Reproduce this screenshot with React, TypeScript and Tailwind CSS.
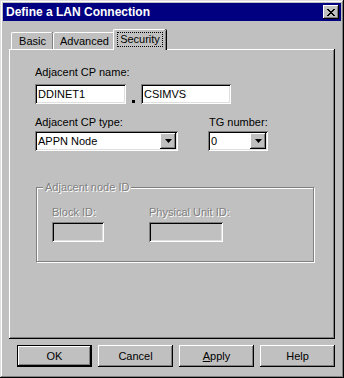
const raised =
  'shadow-[inset_-1px_-1px_0_#000,inset_1px_1px_0_#fff,inset_-2px_-2px_0_#808080]';
const sunken =
  'shadow-[inset_1px_1px_0_#808080,inset_-1px_-1px_0_#fff,inset_2px_2px_0_#000,inset_-2px_-2px_0_#dfdfdf]';
const disabledText = 'text-[#808080] [text-shadow:1px_1px_0_#fff]';

const TextBox = ({ value, w, disabled }: { value?: string; w: string; disabled?: boolean }) => (
  <div
    className={`${w} h-[20px] ${sunken} ${disabled ? 'bg-[#c0c0c0]' : 'bg-white'} flex items-center pl-[3px] text-black`}
  >
    {value}
  </div>
);

const Combo = ({ value, w }: { value: string; w: string }) => (
  <div className={`${w} h-[20px] ${sunken} bg-white flex items-center justify-between pl-[3px] pr-[2px]`}>
    <span>{value}</span>
    <div className={`w-[16px] h-[16px] bg-[#c0c0c0] ${raised} flex items-center justify-center`}>
      <svg width="7" height="4" viewBox="0 0 7 4">
        <polygon points="0,0 7,0 3.5,4" fill="#000" />
      </svg>
    </div>
  </div>
);

const Tab = ({ label, w, selected }: { label: string; w: string; selected?: boolean }) => (
  <div
    className={`${w} flex items-center justify-center bg-[#c0c0c0] rounded-t-[2px] border-l border-t border-white shadow-[inset_-1px_0_0_#808080,1px_0_0_#000] ${
      selected ? 'h-[21px] -mx-[2px] relative z-10 -mb-[1px] pb-[2px]' : 'h-[17px]'
    }`}
  >
    {selected ? (
      <span className="border border-dotted border-black px-[2px] leading-[13px]">{label}</span>
    ) : (
      label
    )}
  </div>
);

const Button = ({ children, def }: { children: React.ReactNode; def?: boolean }) => (
  <div
    className={`w-[75px] h-[22px] bg-[#c0c0c0] flex items-center justify-center ${
      def
        ? 'border border-black shadow-[inset_-1px_-1px_0_#000,inset_1px_1px_0_#fff,inset_-2px_-2px_0_#808080]'
        : raised
    }`}
  >
    {children}
  </div>
);

export default function App() {
  return (
    <div
      className="w-[344px] h-[378px] bg-[#c0c0c0] p-[3px] flex flex-col text-[11px] leading-[13px] text-black shadow-[inset_-1px_-1px_0_#000,inset_1px_1px_0_#dfdfdf,inset_-2px_-2px_0_#808080,inset_2px_2px_0_#fff]"
      style={{ fontFamily: '"Liberation Sans", Arial, sans-serif' }}
    >
      {/* Title bar */}
      <div className="h-[18px] bg-[#000080] flex items-center justify-between pl-[3px] pr-[2px]">
        <span className="text-white font-bold text-[12px]">Define a LAN Connection</span>
        <div className={`w-[16px] h-[14px] bg-[#c0c0c0] ${raised} flex items-center justify-center`}>
          <svg width="8" height="7" viewBox="0 0 8 7" shapeRendering="crispEdges">
            <path
              d="M0 0h2v1H0zM6 0h2v1H6zM1 1h2v1H1zM5 1h2v1H5zM2 2h4v1H2zM3 3h2v1H3zM2 4h4v1H2zM1 5h2v1H1zM5 5h2v1H5zM0 6h2v1H0zM6 6h2v1H6z"
              fill="#000"
            />
          </svg>
        </div>
      </div>

      <div className="px-[6px] pt-[8px] flex flex-col">
        {/* Tabs */}
        <div className="flex items-end h-[20px] pl-[2px]">
          <Tab label="Basic" w="w-[42px]" />
          <Tab label="Advanced" w="w-[62px]" />
          <Tab label="Security" w="w-[53px]" selected />
        </div>

        {/* Panel */}
        <div className="h-[290px] shadow-[inset_-1px_-1px_0_#000,inset_1px_1px_0_#fff,inset_-2px_-2px_0_#808080] pl-[26px] pt-[17px] flex flex-col">
          <div>Adjacent CP name:</div>
          <div className="flex items-end mt-[5px]">
            <TextBox value="DDINET1" w="w-[91px]" />
            <div className="w-[15px] flex justify-center pb-[1px]">
              <div className="w-[3px] h-[3px] bg-black" />
            </div>
            <TextBox value="CSIMVS" w="w-[90px]" />
          </div>

          <div className="flex mt-[12px]">
            <div className="w-[173px] flex flex-col">
              <div>Adjacent CP type:</div>
              <div className="mt-[2px]">
                <Combo value="APPN Node" w="w-[143px]" />
              </div>
            </div>
            <div className="flex flex-col">
              <div className="pl-[1px]">TG number:</div>
              <div className="mt-[2px]">
                <Combo value="0" w="w-[60px]" />
              </div>
            </div>
          </div>

          {/* Group box */}
          <fieldset className="ml-[1px] mt-[30px] w-[278px] h-[81px] border border-[#808080] shadow-[1px_1px_0_#fff,inset_1px_1px_0_#fff]">
            <legend className={`ml-[6px] px-[2px] bg-[#c0c0c0] ${disabledText}`}>Adjacent node ID</legend>
            <div className="flex mt-[12px] pl-[15px]">
              <div className="w-[97px] flex flex-col">
                <div className={disabledText}>Block ID:</div>
                <div className="mt-[3px]">
                  <TextBox w="w-[52px]" disabled />
                </div>
              </div>
              <div className="flex flex-col">
                <div className={disabledText}>Physical Unit ID:</div>
                <div className="mt-[3px]">
                  <TextBox w="w-[74px]" disabled />
                </div>
              </div>
            </div>
          </fieldset>
        </div>

        {/* Buttons */}
        <div className="flex justify-end gap-[6px] mt-[6px]">
          <Button def>OK</Button>
          <Button>Cancel</Button>
          <Button>
            <span>
              <span className="underline">A</span>pply
            </span>
          </Button>
          <Button>Help</Button>
        </div>
      </div>
    </div>
  );
}
